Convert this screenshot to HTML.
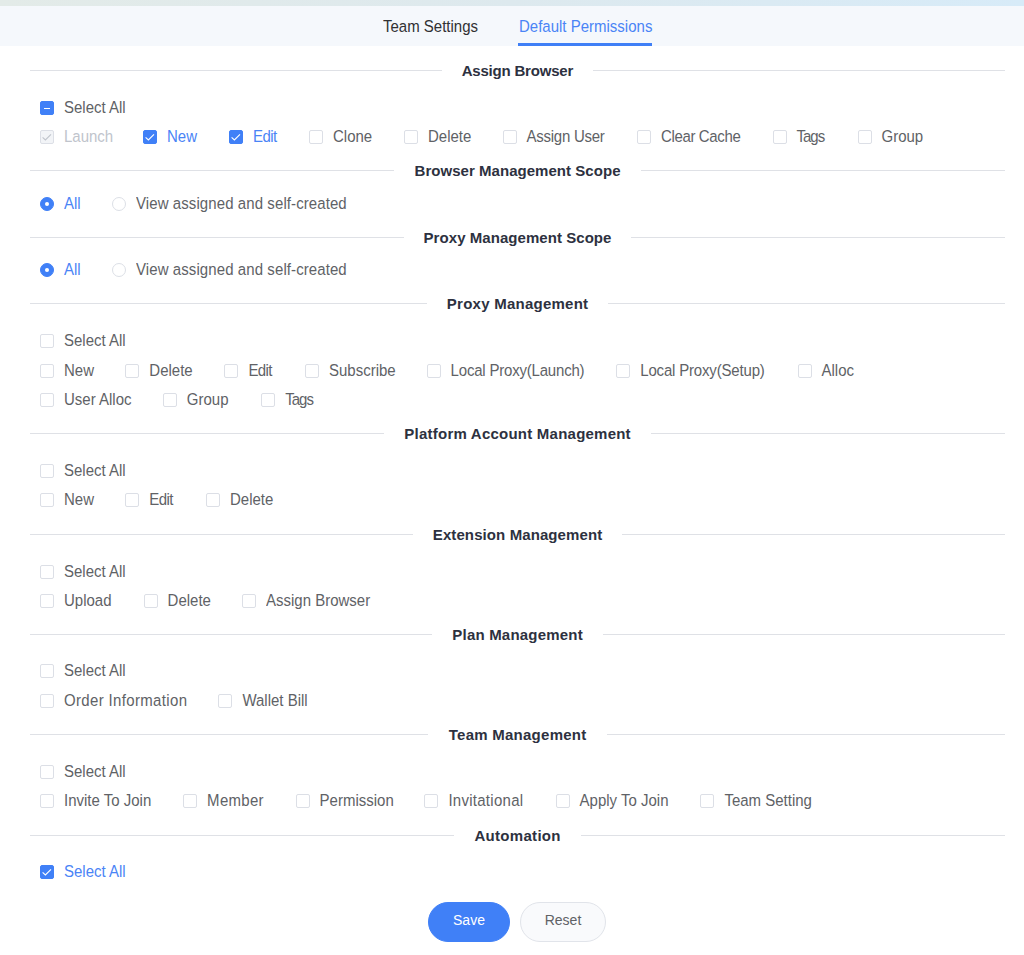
<!DOCTYPE html>
<html><head><meta charset="utf-8">
<style>
html,body{margin:0;padding:0;}
body{width:1024px;height:955px;overflow:hidden;position:relative;background:#fff;font-family:"Liberation Sans",sans-serif;}
.strip{position:absolute;left:0;top:0;width:1024px;height:6px;background:linear-gradient(90deg,#e3ebe8 0%,#dde9ee 50%,#d7ebf8 100%);}
.tabs{position:absolute;left:0;top:6px;width:1024px;height:40px;background:#f5f8fc;}
.tab{position:absolute;top:17px;font-size:15px;line-height:20px;transform:scaleY(1.05);transform-origin:0 15px;color:#303133;white-space:nowrap;}
.tab.act{color:#4a84f6;}
.ul{position:absolute;left:518px;top:43px;width:134px;height:3.4px;background:#3f7ff6;}
.dv{position:absolute;left:30px;width:975px;height:1px;background:#dfe1e6;}
.tt{position:absolute;left:30px;width:975px;height:0;text-align:center;}
.tt span{position:relative;display:inline-block;top:-9px;padding:0 20px;background:#fff;font-size:15px;line-height:20px;font-weight:bold;color:#2d3140;white-space:nowrap;}
.cb{position:absolute;width:12px;height:12px;border:1px solid #dcdfe6;border-radius:2px;background:#fff;}
.cb svg{position:absolute;left:-1px;top:-1px;}
.cb.on{background:#4080f7;border-color:#4080f7;}
.cb.ind{background:#4080f7;border-color:#4080f7;}
.cb.ind i{position:absolute;left:3px;top:5.5px;width:6px;height:1px;background:#fff;}
.cb.dis{background:#f2f4f7;border-color:#dcdfe6;}
.rd{position:absolute;width:12px;height:12px;border:1px solid #dcdfe6;border-radius:50%;background:#fff;}
.rd.on{background:#4080f7;border-color:#4080f7;}
.rd.on:after{content:"";position:absolute;left:4px;top:4px;width:4px;height:4px;border-radius:50%;background:#fff;}
.lb{position:absolute;font-size:15px;line-height:20px;margin-top:-3px;transform:scaleY(1.05);transform-origin:0 15px;color:#606266;white-space:nowrap;}
.lb.lon{color:#4a84f6;}
.lb.ldis{color:#c0c4cc;}
.btn{position:absolute;top:902px;height:38px;border-radius:20px;font-size:14px;line-height:35px;text-align:center;}
.save{left:428px;width:82px;background:#4080f7;border:1px solid #4080f7;color:#fff;height:38px;width:80px;}
.reset{left:520px;width:84px;background:#f9fafc;border:1px solid #e1e4ea;color:#606266;}
</style></head><body>
<div class="strip"></div>
<div class="tabs"></div>
<div class="tab" style="left:383px">Team Settings</div>
<div class="tab act" style="left:519px">Default Permissions</div>
<div class="ul"></div>
<div class="dv" style="top:70px"></div>
<div class="tt" style="top:70px"><span style="letter-spacing:-0.193px;text-indent:-0.193px">Assign Browser</span></div>
<div class="cb ind" style="left:40px;top:101px"><i></i></div><div class="lb" style="left:64px;top:101px">Select All</div>
<div class="cb dis" style="left:40px;top:130px"><svg width="14" height="14" viewBox="0 0 14 14"><path d="M2.6 7.4 L5.4 10 L11 4.3" fill="none" stroke="#c0c4cc" stroke-width="1.1" stroke-linecap="butt"/></svg></div><div class="lb ldis" style="left:64px;top:130px">Launch</div>
<div class="cb on" style="left:143px;top:130px"><svg width="14" height="14" viewBox="0 0 14 14"><path d="M2.6 7.4 L5.4 10 L11 4.3" fill="none" stroke="#fff" stroke-width="1.1" stroke-linecap="butt"/></svg></div><div class="lb lon" style="left:167px;top:130px">New</div>
<div class="cb on" style="left:229px;top:130px"><svg width="14" height="14" viewBox="0 0 14 14"><path d="M2.6 7.4 L5.4 10 L11 4.3" fill="none" stroke="#fff" stroke-width="1.1" stroke-linecap="butt"/></svg></div><div class="lb lon" style="left:253px;top:130px;letter-spacing:-0.6px">Edit</div>
<div class="cb" style="left:309px;top:130px"></div><div class="lb" style="left:333px;top:130px">Clone</div>
<div class="cb" style="left:404px;top:130px"></div><div class="lb" style="left:428px;top:130px">Delete</div>
<div class="cb" style="left:502.5px;top:130px"></div><div class="lb" style="left:526.5px;top:130px;letter-spacing:-0.25px">Assign User</div>
<div class="cb" style="left:637px;top:130px"></div><div class="lb" style="left:661px;top:130px;letter-spacing:-0.36px">Clear Cache</div>
<div class="cb" style="left:772.5px;top:130px"></div><div class="lb" style="left:796.5px;top:130px;letter-spacing:-1.0px">Tags</div>
<div class="cb" style="left:857.5px;top:130px"></div><div class="lb" style="left:881.5px;top:130px">Group</div>
<div class="dv" style="top:170px"></div>
<div class="tt" style="top:170px"><span style="letter-spacing:0.039px;text-indent:0.039px">Browser Management Scope</span></div>
<div class="rd on" style="left:40px;top:196.5px"></div><div class="lb lon" style="left:64px;top:196.5px">All</div>
<div class="rd" style="left:112px;top:196.5px"></div><div class="lb" style="left:136px;top:196.5px;letter-spacing:0.086px">View assigned and self-created</div>
<div class="dv" style="top:237px"></div>
<div class="tt" style="top:237px"><span style="letter-spacing:0.054px;text-indent:0.054px">Proxy Management Scope</span></div>
<div class="rd on" style="left:40px;top:263px"></div><div class="lb lon" style="left:64px;top:263px">All</div>
<div class="rd" style="left:112px;top:263px"></div><div class="lb" style="left:136px;top:263px;letter-spacing:0.086px">View assigned and self-created</div>
<div class="dv" style="top:303px"></div>
<div class="tt" style="top:303px"><span style="letter-spacing:0.247px;text-indent:0.247px">Proxy Management</span></div>
<div class="cb" style="left:40px;top:334px"></div><div class="lb" style="left:64px;top:334px">Select All</div>
<div class="cb" style="left:40px;top:364px"></div><div class="lb" style="left:64px;top:364px">New</div>
<div class="cb" style="left:125.3px;top:364px"></div><div class="lb" style="left:149.3px;top:364px">Delete</div>
<div class="cb" style="left:224.4px;top:364px"></div><div class="lb" style="left:248.4px;top:364px;letter-spacing:-0.6px">Edit</div>
<div class="cb" style="left:305px;top:364px"></div><div class="lb" style="left:329px;top:364px">Subscribe</div>
<div class="cb" style="left:426.6px;top:364px"></div><div class="lb" style="left:450.6px;top:364px;letter-spacing:-0.2px">Local Proxy(Launch)</div>
<div class="cb" style="left:616.25px;top:364px"></div><div class="lb" style="left:640.25px;top:364px;letter-spacing:-0.176px">Local Proxy(Setup)</div>
<div class="cb" style="left:797.5px;top:364px"></div><div class="lb" style="left:821.5px;top:364px">Alloc</div>
<div class="cb" style="left:40px;top:393px"></div><div class="lb" style="left:64px;top:393px">User Alloc</div>
<div class="cb" style="left:162.8px;top:393px"></div><div class="lb" style="left:186.8px;top:393px">Group</div>
<div class="cb" style="left:261.25px;top:393px"></div><div class="lb" style="left:285.25px;top:393px;letter-spacing:-1.0px">Tags</div>
<div class="dv" style="top:433px"></div>
<div class="tt" style="top:433px"><span style="letter-spacing:0.229px;text-indent:0.229px">Platform Account Management</span></div>
<div class="cb" style="left:40px;top:463.5px"></div><div class="lb" style="left:64px;top:463.5px">Select All</div>
<div class="cb" style="left:40px;top:493px"></div><div class="lb" style="left:64px;top:493px">New</div>
<div class="cb" style="left:125.3px;top:493px"></div><div class="lb" style="left:149.3px;top:493px;letter-spacing:-0.6px">Edit</div>
<div class="cb" style="left:206px;top:493px"></div><div class="lb" style="left:230px;top:493px">Delete</div>
<div class="dv" style="top:534px"></div>
<div class="tt" style="top:534px"><span style="letter-spacing:0.098px;text-indent:0.098px">Extension Management</span></div>
<div class="cb" style="left:40px;top:564.5px"></div><div class="lb" style="left:64px;top:564.5px">Select All</div>
<div class="cb" style="left:40px;top:594px"></div><div class="lb" style="left:64px;top:594px">Upload</div>
<div class="cb" style="left:143.6px;top:594px"></div><div class="lb" style="left:167.6px;top:594px">Delete</div>
<div class="cb" style="left:242px;top:594px"></div><div class="lb" style="left:266px;top:594px">Assign Browser</div>
<div class="dv" style="top:634px"></div>
<div class="tt" style="top:634px"><span style="letter-spacing:0.205px;text-indent:0.205px">Plan Management</span></div>
<div class="cb" style="left:40px;top:664.2px"></div><div class="lb" style="left:64px;top:664.2px">Select All</div>
<div class="cb" style="left:40px;top:694px"></div><div class="lb" style="left:64px;top:694px;letter-spacing:0.34px">Order Information</div>
<div class="cb" style="left:218.4px;top:694px"></div><div class="lb" style="left:242.4px;top:694px">Wallet Bill</div>
<div class="dv" style="top:734px"></div>
<div class="tt" style="top:734px"><span style="letter-spacing:0.258px;text-indent:0.258px">Team Management</span></div>
<div class="cb" style="left:40px;top:765px"></div><div class="lb" style="left:64px;top:765px">Select All</div>
<div class="cb" style="left:40px;top:794.3px"></div><div class="lb" style="left:64px;top:794.3px">Invite To Join</div>
<div class="cb" style="left:183.1px;top:794.3px"></div><div class="lb" style="left:207.1px;top:794.3px;letter-spacing:0.3px">Member</div>
<div class="cb" style="left:295.6px;top:794.3px"></div><div class="lb" style="left:319.6px;top:794.3px">Permission</div>
<div class="cb" style="left:424.4px;top:794.3px"></div><div class="lb" style="left:448.4px;top:794.3px;letter-spacing:0.27px">Invitational</div>
<div class="cb" style="left:555.6px;top:794.3px"></div><div class="lb" style="left:579.6px;top:794.3px">Apply To Join</div>
<div class="cb" style="left:700.4px;top:794.3px"></div><div class="lb" style="left:724.4px;top:794.3px">Team Setting</div>
<div class="dv" style="top:834.5px"></div>
<div class="tt" style="top:834.5px"><span style="letter-spacing:0.299px;text-indent:0.299px">Automation</span></div>
<div class="cb on" style="left:40px;top:865px"><svg width="14" height="14" viewBox="0 0 14 14"><path d="M2.6 7.4 L5.4 10 L11 4.3" fill="none" stroke="#fff" stroke-width="1.1" stroke-linecap="butt"/></svg></div><div class="lb lon" style="left:64px;top:865px">Select All</div>
<div class="btn save">Save</div>
<div class="btn reset">Reset</div>
</body></html>
